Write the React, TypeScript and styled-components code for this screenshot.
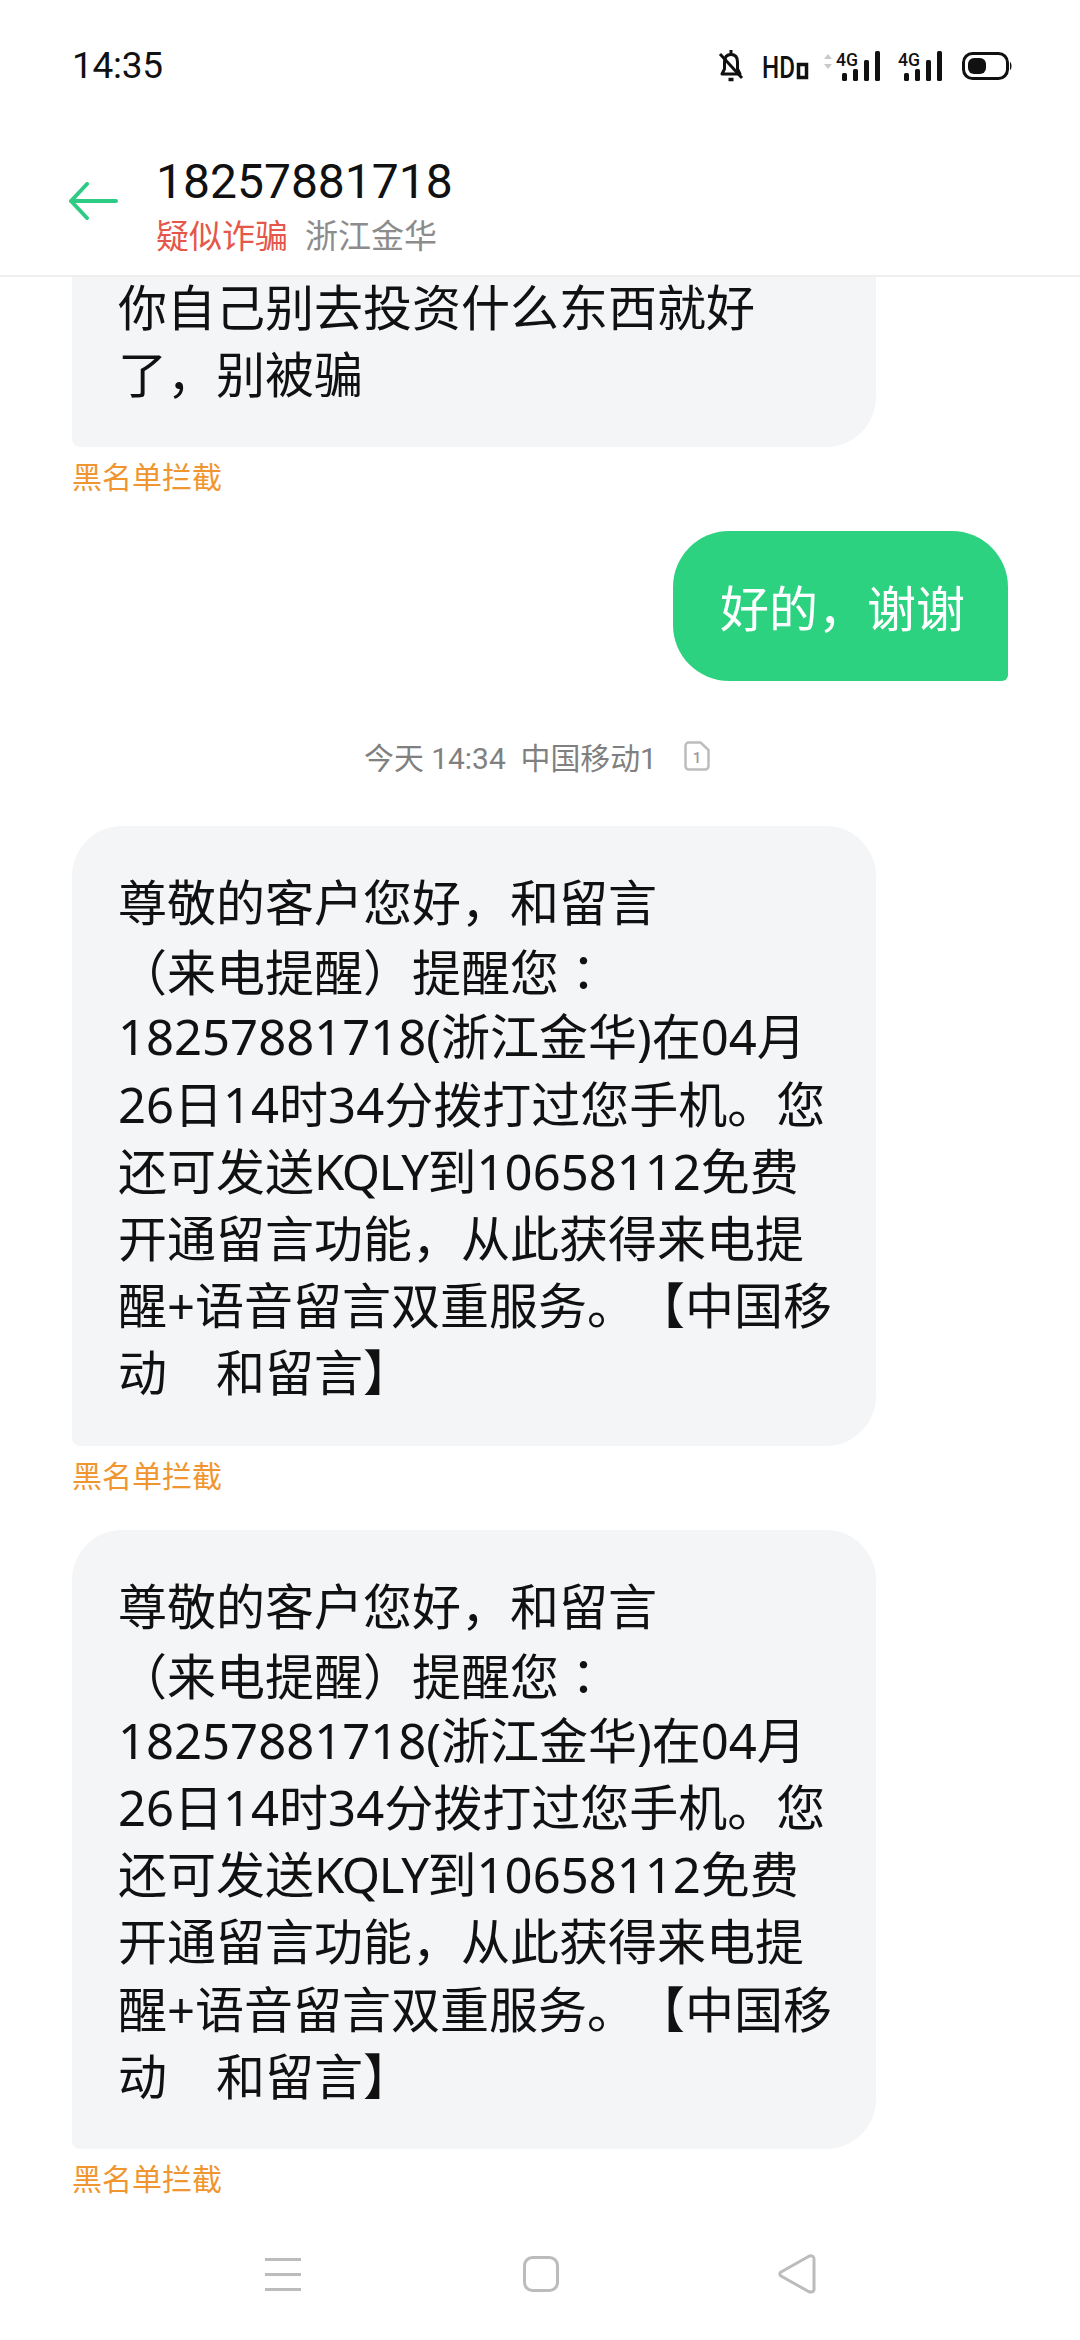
import * as React from 'react'
import styled, { createGlobalStyle } from 'styled-components'

const NOTICE_LINES = [
  '尊敬的客户您好，和留言',
  '（来电提醒）提醒您',
  '18257881718(浙江金华)在04月',
  '26日14时34分拨打过您手机。您',
  '还可发送',
  '到10658112免费',
  '开通留言功能，从此获得来电提',
  '醒+语音留言双重服务。【中国移',
  '动　和留言】'
]

const GlobalStyle = createGlobalStyle`
  html, body {
    margin: 0;
    padding: 0;
    background: #fff;
  }
  body {
    font-family: Roboto, "Noto Sans CJK SC", sans-serif;
    text-spacing-trim: space-all;
  }
`

const Screen = styled.div`
  display: flex;
  flex-direction: column;
  width: 1080px;
  height: 2340px;
  overflow: hidden;
  background: #fff;
`

const StatusBar = styled.header`
  display: flex;
  align-items: center;
  justify-content: space-between;
  flex: none;
  height: 66px;
  padding: 33px 67px 0 72px;
`

const Clock = styled.span`
  font-size: 37px;
  line-height: 66px;
  letter-spacing: -0.3px;
  color: #111;
`

const StatusIcons = styled.div`
  display: flex;
  align-items: center;
`

const StatusIcon = styled.svg<{ $after?: number; $before?: number }>`
  display: block;
  flex: none;
  margin-left: ${p => p.$before ?? 0}px;
  margin-right: ${p => p.$after ?? 0}px;
`

const StatusLabel = styled.text`
  font-family: Roboto, sans-serif;
  font-weight: 500;
  fill: #111;
`

const TitleBar = styled.div`
  display: flex;
  align-items: center;
  flex: none;
  height: 178px;
  padding-left: 68px;
  box-sizing: border-box;
  border-bottom: 2px solid #efefef;
`

const BackIcon = styled.svg`
  flex: none;
  width: 50px;
  height: 38px;
  margin-right: 38px;
  margin-top: 27px;
`

const Contact = styled.div`
  display: flex;
  flex-direction: column;
  margin-top: 38px;
`

const Phone = styled.div`
  font-size: 48px;
  line-height: 60px;
  color: #111;
`

const Tags = styled.div`
  display: flex;
  gap: 17px;
  margin-top: 2px;
  font-size: 33px;
  line-height: 46px;
`

const Tag = styled.span<{ $warn?: boolean }>`
  color: ${p => (p.$warn ? '#e5574a' : '#8c8c8c')};
`

const Messages = styled.main`
  display: flex;
  flex: 1;
  flex-direction: column;
  justify-content: flex-end;
  min-height: 0;
  overflow: hidden;
  padding: 0 72px 20px;
`

const Bubble = styled.div<{ $out?: boolean }>`
  flex: none;
  box-sizing: border-box;
  margin-top: 33px;
  font-family: "Noto Sans", "Noto Sans CJK SC", sans-serif;
  font-size: 49px;
  white-space: pre-line;
  ${p =>
    p.$out
      ? `
    align-self: flex-end;
    width: 335px;
    padding: 43px 0 39px 47px;
    line-height: 68px;
    color: #fff;
    background: #2dd281;
    border-radius: 56px 56px 6px 56px;
  `
      : `
    width: 804px;
    padding: 43px 0 39px 46px;
    line-height: 67.2px;
    color: #111;
    background: #f4f5f7;
    border-radius: 50px 50px 50px 8px;
  `}
`

const NoticeLine = styled.div`
  height: 67.2px;
  white-space: nowrap;
`

// the reference draws this one colon centred in its cell
const CentredColon = styled.span`
  font-family: "Noto Sans CJK TC", sans-serif;
`

const Brand = styled.span`
  letter-spacing: -1.5px;
`

const BlockedLabel = styled.div`
  flex: none;
  margin: 11px 0 0;
  font-size: 30px;
  line-height: 40px;
  color: #ef9630;
`

const TimeRow = styled.div`
  display: flex;
  align-items: center;
  justify-content: center;
  flex: none;
  gap: 27px;
  height: 40px;
  margin: 55px 0 17px;
  padding-right: 6px;
  font-size: 29.9px;
  color: #808080;
  white-space: pre;
`

const NavBar = styled.nav`
  display: flex;
  align-items: center;
  justify-content: center;
  flex: none;
  gap: 222px;
  box-sizing: border-box;
  height: 120px;
  padding-bottom: 12px;
  color: #bcbcbc;
`

const BackTriangle = styled.svg`
  margin-left: -3px;
`

const BellOff = () => (
  <StatusIcon $after={17} width="28" height="34" viewBox="0 0 28 34" fill="none" stroke="#111" strokeWidth="3">
    <path d="M5 25 L7.5 20 V13 C7.5 8 10 5.5 14 5.5 C18 5.5 20.5 8 20.5 13 V20 L23 25 Z" strokeLinejoin="round" />
    <path d="M14 1 V5" />
    <path d="M3 5 L25 29" />
    <path d="M11.5 30.5 H16.5" strokeWidth="3.5" />
  </StatusIcon>
)

const HdIcon = () => (
  <StatusIcon $after={12} width="48" height="40" viewBox="0 0 48 40">
    <StatusLabel x="0" y="32" fontSize="32" textLength="33" lengthAdjust="spacingAndGlyphs">HD</StatusLabel>
    <rect x="36.5" y="18.5" width="8" height="13" fill="none" stroke="#111" strokeWidth="3.5" />
  </StatusIcon>
)

const SignalIcon: React.FC<{ arrows?: boolean }> = ({ arrows }) => {
  const bars = [
    { x: 20, top: 22 },
    { x: 31, top: 18 },
    { x: 42, top: 9 },
    { x: 53, top: 0 }
  ]
  return (
    <StatusIcon $before={arrows ? 0 : 4} width="58" height="38" viewBox="0 -4 58 38">
      {arrows && <path d="M6 3 L2 8 H10 Z M6 18 L2 13 H10 Z" fill="#c9c9c9" />}
      <StatusLabel x="14" y="15" fontSize="18" textLength="22" lengthAdjust="spacingAndGlyphs">4G</StatusLabel>
      {bars.map(b => (
        <rect key={b.x} x={b.x} y={b.top} width="5" height={30 - b.top} rx="1.5" fill="#111" />
      ))}
    </StatusIcon>
  )
}

const BatteryIcon = () => (
  <StatusIcon $before={20} width="51" height="28" viewBox="0 0 51 28">
    <rect x="1.5" y="1.5" width="44" height="25" rx="9" fill="none" stroke="#111" strokeWidth="3" />
    <rect x="6" y="6" width="18" height="16" rx="6" fill="#111" />
    <path d="M48 10 C50 11 50 17 48 18 Z" fill="#111" />
  </StatusIcon>
)

const SimIcon = () => (
  <svg width="26" height="30" viewBox="0 0 26 30" fill="none">
    <path d="M4.5 1.5 H16.5 L24.5 9 V25 C24.5 27 23 28.5 21 28.5 H5 C3 28.5 1.5 27 1.5 25 V5 C1.5 3 3 1.5 4.5 1.5 Z" stroke="#bdbdbd" strokeWidth="2.5" strokeLinejoin="round" />
    <text x="13" y="21.5" textAnchor="middle" fontFamily="Roboto, sans-serif" fontSize="15" fontWeight="500" fill="#9a9a9a">1</text>
  </svg>
)

const CallNotice = () => (
  <Bubble>
    <NoticeLine>{NOTICE_LINES[0]}</NoticeLine>
    <NoticeLine>{NOTICE_LINES[1]}<CentredColon>：</CentredColon></NoticeLine>
    <NoticeLine>{NOTICE_LINES[2]}</NoticeLine>
    <NoticeLine>{NOTICE_LINES[3]}</NoticeLine>
    <NoticeLine>{NOTICE_LINES[4]}<Brand>KQLY</Brand>{NOTICE_LINES[5]}</NoticeLine>
    <NoticeLine>{NOTICE_LINES[6]}</NoticeLine>
    <NoticeLine>{NOTICE_LINES[7]}</NoticeLine>
    <NoticeLine>{NOTICE_LINES[8]}</NoticeLine>
  </Bubble>
)

const App: React.FC = () => {
  return (
    <Screen>
      <GlobalStyle />
      <StatusBar>
        <Clock>14:35</Clock>
        <StatusIcons>
          <BellOff />
          <HdIcon />
          <SignalIcon arrows />
          <SignalIcon />
          <BatteryIcon />
        </StatusIcons>
      </StatusBar>
      <TitleBar>
        <BackIcon viewBox="0 0 50 38" fill="none" stroke="#2dcb83" strokeWidth="4" strokeLinecap="round" strokeLinejoin="round">
          <path d="M48 19 H3 M19 2 L3 19 L19 36" />
        </BackIcon>
        <Contact>
          <Phone>18257881718</Phone>
          <Tags>
            <Tag $warn>疑似诈骗</Tag>
            <Tag>浙江金华</Tag>
          </Tags>
        </Contact>
      </TitleBar>
      <Messages>
        <Bubble>{`你自己别去投资什么东西就好
了，别被骗`}</Bubble>
        <BlockedLabel>黑名单拦截</BlockedLabel>
        <Bubble $out>好的，谢谢</Bubble>
        <TimeRow>
          <span>今天 14:34  中国移动1</span>
          <SimIcon />
        </TimeRow>
        <CallNotice />
        <BlockedLabel>黑名单拦截</BlockedLabel>
        <CallNotice />
        <BlockedLabel>黑名单拦截</BlockedLabel>
      </Messages>
      <NavBar>
        <svg width="36" height="33" viewBox="0 0 36 33" fill="currentColor">
          <rect y="0" width="36" height="3" />
          <rect y="15" width="36" height="3" />
          <rect y="30" width="36" height="3" />
        </svg>
        <svg width="36" height="36" viewBox="0 0 36 36" fill="none" stroke="currentColor" strokeWidth="3">
          <rect x="1.5" y="1.5" width="33" height="33" rx="8" />
        </svg>
        <BackTriangle width="38" height="40" viewBox="0 0 38 40" fill="none" stroke="currentColor" strokeWidth="3" strokeLinejoin="round">
          <path d="M35 2.5 Q32.5 1 30.5 2.5 L3 18 Q0.5 20 3 22 L30.5 37.5 Q35 39 36 36 V5 Q36 3 35 2.5 Z" />
        </BackTriangle>
      </NavBar>
    </Screen>
  )
}

export default App
